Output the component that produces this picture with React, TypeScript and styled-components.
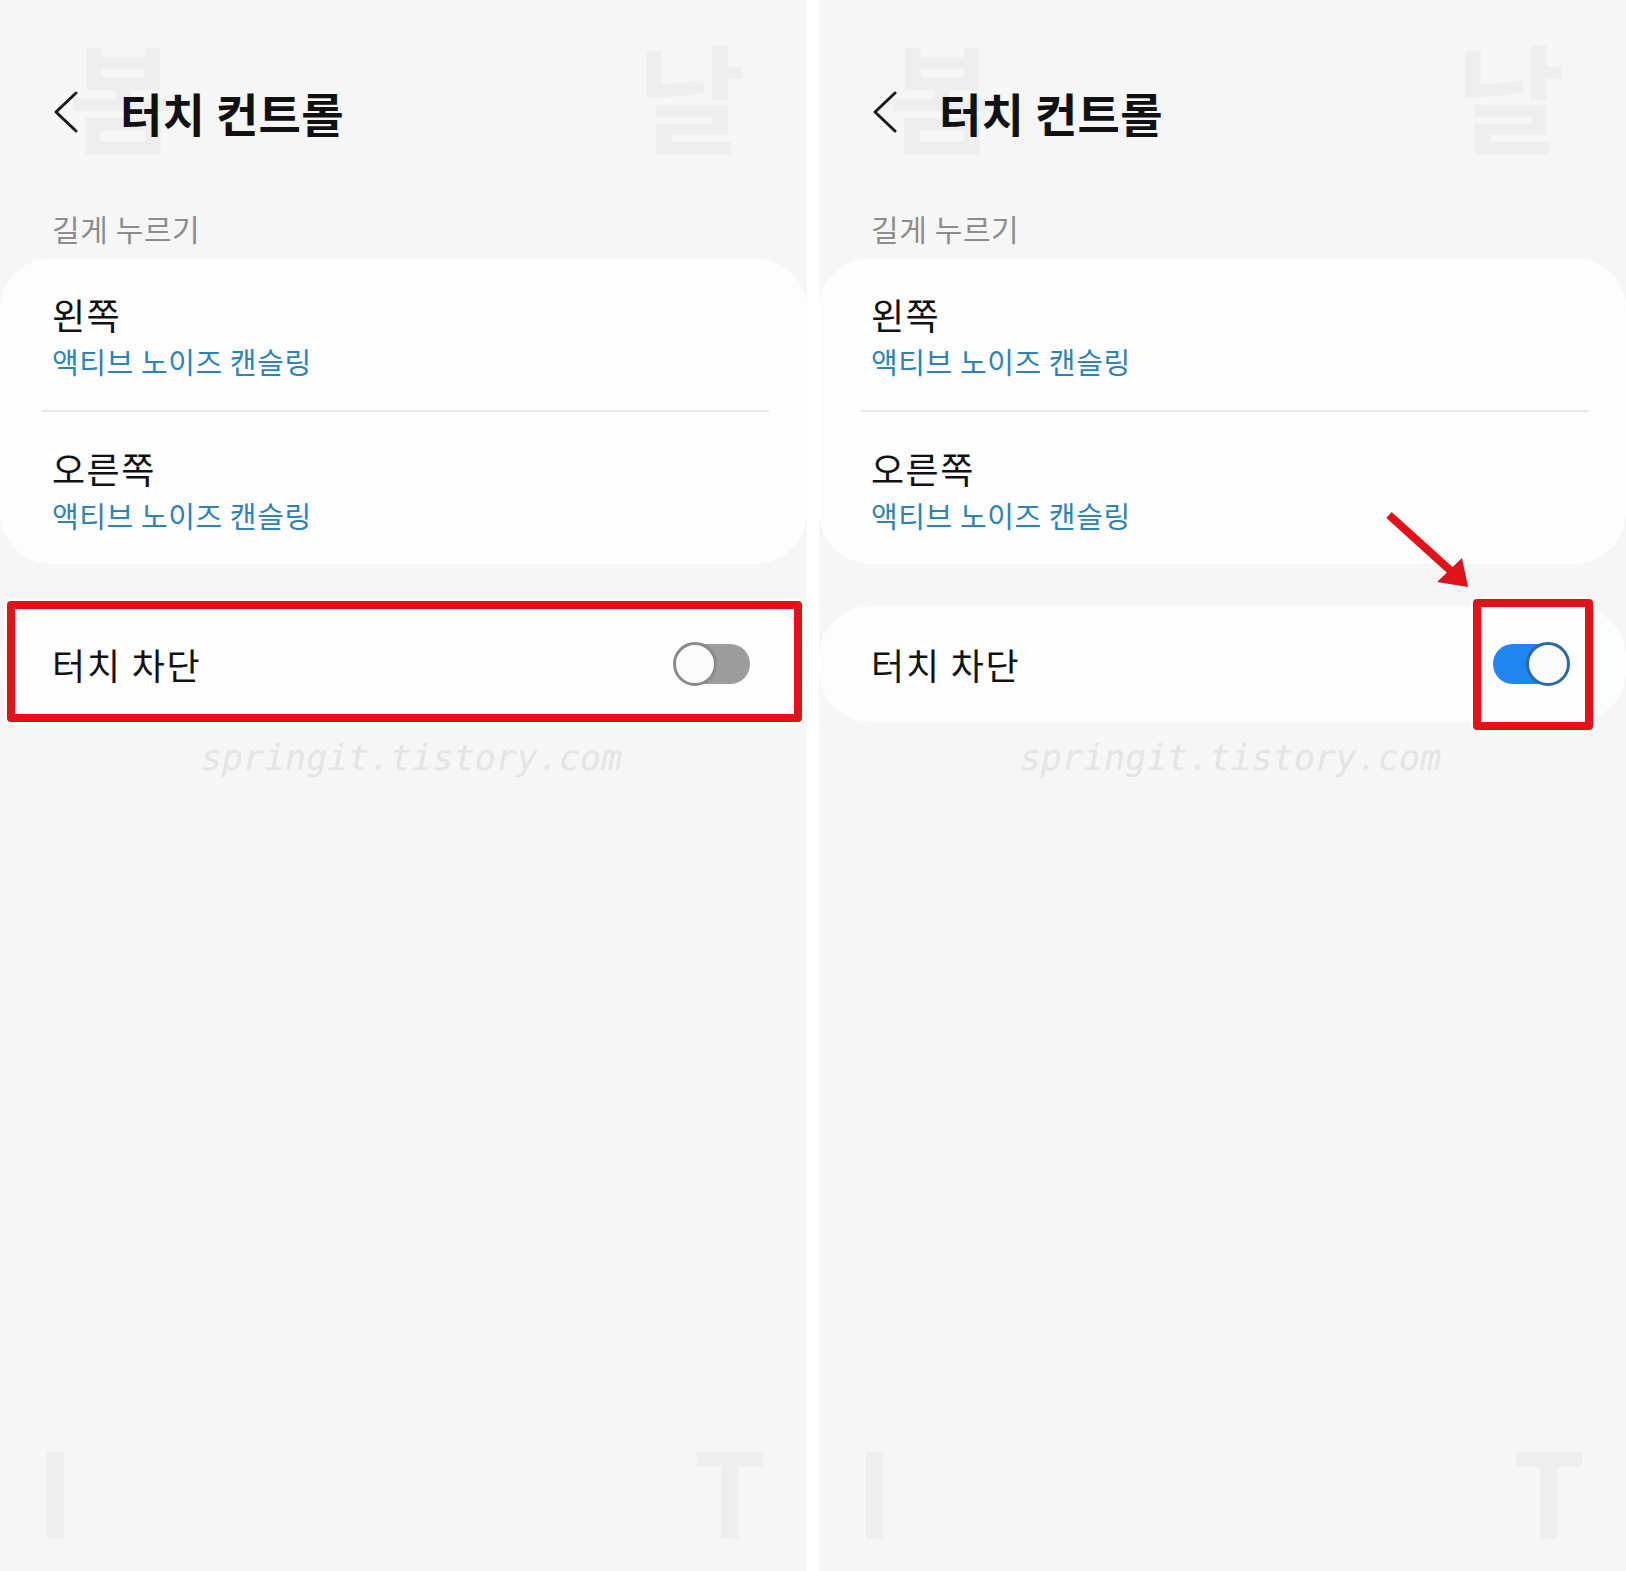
import React, { FC } from 'react';
import styled, { createGlobalStyle } from 'styled-components';

const GlobalStyle = createGlobalStyle`
    html, body {
        margin: 0;
        padding: 0;
        background: #fff;
    }
    body {
        font-family: "Noto Sans CJK KR", "Noto Sans", sans-serif;
    }
`;

const Page = styled.div`
    display: flex;
    gap: 12px;
    width: 1626px;
    height: 1571px;
    background: #fff;
`;

const Panel = styled.section`
    position: relative;
    display: flex;
    flex-direction: column;
    width: 807px;
    height: 1571px;
    background: #f6f6f6;
    overflow: hidden;
`;

const BigGlyph = styled.span<{ $x: number; $y: number }>`
    position: absolute;
    left: ${p => p.$x}px;
    top: ${p => p.$y}px;
    font-size: 118px;
    font-weight: 700;
    line-height: 1.3;
    color: rgba(0, 0, 0, 0.03);
    pointer-events: none;
`;

const Header = styled.header`
    display: flex;
    align-items: center;
    gap: 42px;
    height: 46px;
    margin-top: 89px;
    padding-left: 54px;
`;

const Title = styled.h1`
    margin: 0;
    font-size: 46px;
    font-weight: 700;
    line-height: 46px;
    letter-spacing: 0.3px;
    color: #111;
`;

const SectionLabel = styled.div`
    margin-top: 78px;
    padding-left: 52px;
    font-size: 30px;
    line-height: 30px;
    letter-spacing: 0.6px;
    color: #8d8d8d;
`;

const Card = styled.div`
    margin-top: 15px;
    background: #fdfdfd;
    border-radius: 52px;
`;

const Row = styled.div`
    display: flex;
    flex-direction: column;
    gap: 15px;
    padding: 38px 52px 34px;
`;

const ItemTitle = styled.div`
    font-size: 36px;
    line-height: 36px;
    letter-spacing: 1.5px;
    color: #111;
`;

const ItemSub = styled.div`
    font-size: 29px;
    line-height: 29px;
    letter-spacing: 0.6px;
    color: #2f82b5;
`;

const Divider = styled.div`
    height: 2px;
    margin: 0 38px 0 42px;
    background: #e6e6e6;
`;

const ToggleCard = styled.div`
    position: relative;
    display: flex;
    align-items: center;
    justify-content: space-between;
    height: 116px;
    margin-top: 42px;
    padding: 0 57px 0 52px;
    background: #fdfdfd;
    border-radius: 52px;
`;

const ToggleLabel = styled.div`
    font-size: 36px;
    line-height: 36px;
    letter-spacing: 1.8px;
    color: #111;
`;

const ToggleWrap = styled.div`
    position: relative;
`;

const Track = styled.div<{ $on: boolean }>`
    position: relative;
    width: 76px;
    height: 40px;
    border-radius: 20px;
    background: ${p => (p.$on ? '#1f86ef' : '#9c9c9c')};
`;

const Knob = styled.div<{ $on: boolean }>`
    position: absolute;
    top: -2px;
    ${p => (p.$on ? 'right: -1px;' : 'left: -1px;')}
    width: 38px;
    height: 38px;
    border-radius: 50%;
    background: #fbfbfb;
    border: 3px solid ${p => (p.$on ? '#2a6aa3' : '#8a8a8a')};
`;

const Highlight = styled.div<{ $inset: string }>`
    position: absolute;
    inset: ${p => p.$inset};
    border: 8px solid #e2121a;
    border-radius: 4px;
    box-shadow: 0 0 0 2px rgba(255, 255, 255, 0.9);
    pointer-events: none;
`;

const Arrow = styled.svg`
    position: absolute;
    left: 560px;
    top: 505px;
    width: 100px;
    height: 90px;
    overflow: visible;
`;

const Watermark = styled.div`
    margin-top: 14px;
    padding-left: 16px;
    font-family: "DejaVu Sans Mono", monospace;
    font-style: italic;
    font-size: 35px;
    line-height: 44px;
    text-align: center;
    color: #e4e4e4;
`;

const BackIcon: FC = () => (
    <svg width="24" height="42" viewBox="0 0 24 42">
        <polyline points="22,2 2,21 22,40" fill="none" stroke="#1a1a1a" strokeWidth="3" strokeLinecap="round" strokeLinejoin="round" />
    </svg>
);

const Toggle: FC<{ on: boolean; marked?: boolean }> = ({ on, marked }) => (
    <ToggleWrap>
        <Track $on={on}>
            <Knob $on={on} />
        </Track>
        {marked && <Highlight $inset="-45px -24px -46px -20px" />}
    </ToggleWrap>
);

const Screen: FC<{ on: boolean }> = ({ on }) => (
    <Panel>
        <BigGlyph $x={69} $y={17}>봄</BigGlyph>
        <BigGlyph $x={637} $y={17}>날</BigGlyph>
        <BigGlyph $x={36} $y={1411}>I</BigGlyph>
        <BigGlyph $x={693} $y={1411}>T</BigGlyph>

        <Header>
            <BackIcon />
            <Title>터치 컨트롤</Title>
        </Header>

        <SectionLabel>길게 누르기</SectionLabel>
        <Card>
            <Row>
                <ItemTitle>왼쪽</ItemTitle>
                <ItemSub>액티브 노이즈 캔슬링</ItemSub>
            </Row>
            <Divider />
            <Row>
                <ItemTitle>오른쪽</ItemTitle>
                <ItemSub>액티브 노이즈 캔슬링</ItemSub>
            </Row>
        </Card>

        <ToggleCard>
            <ToggleLabel>터치 차단</ToggleLabel>
            <Toggle on={on} marked={on} />
            {!on && <Highlight $inset="-5px 5px 0 7px" />}
        </ToggleCard>

        <Watermark>springit.tistory.com</Watermark>

        {on && (
            <Arrow viewBox="0 0 100 90">
                <line x1="10" y1="10" x2="72" y2="66" stroke="#fff" strokeWidth="12" strokeLinecap="round" />
                <polygon points="58,77 83,53 89,82" fill="#fff" stroke="#fff" strokeWidth="4" strokeLinejoin="round" />
                <line x1="10" y1="10" x2="72" y2="66" stroke="#e2121a" strokeWidth="8" />
                <polygon points="58,77 83,53 89,82" fill="#e2121a" />
            </Arrow>
        )}
    </Panel>
);

export default function App() {
    return (
        <>
            <GlobalStyle />
            <Page>
                <Screen on={false} />
                <Screen on={true} />
            </Page>
        </>
    );
}
